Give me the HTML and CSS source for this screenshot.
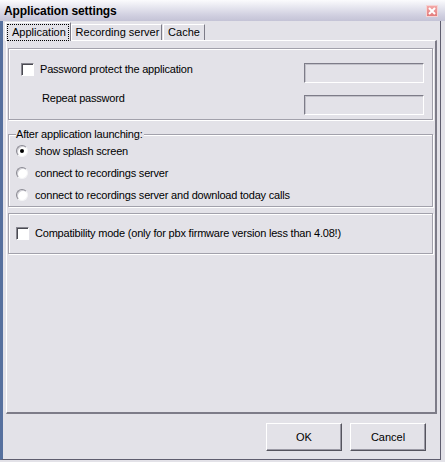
FILE: index.html
```html
<!DOCTYPE html>
<html>
<head>
<meta charset="utf-8">
<link rel="stylesheet" href="styles.css">
</head>
<body>
<div class="window">
  <div class="titlebar">
    <span class="title">Application settings</span>
    <span class="close"><svg width="10" height="10" viewBox="0 0 10 10"><path d="M2 2 L8 8 M8 2 L2 8" stroke="#fff" stroke-width="2"/></svg></span>
  </div>
  <div class="client">
    <div class="tabs">
      <div class="tab tab-sel"><span class="focus">Application</span></div>
      <div class="tab tab-rec">Recording server</div>
      <div class="tab tab-cache">Cache</div>
    </div>
    <div class="panel">
      <div class="group group1">
        <div class="check-row">
          <span class="checkbox"></span>
          <span class="label">Password protect the application</span>
        </div>
        <div class="field"></div>
        <div class="repeat">Repeat password</div>
        <div class="field"></div>
      </div>
      <fieldset class="group group2">
        <legend>After application launching:</legend>
        <div class="radio-row"><span class="radio on"></span><span class="label">show splash screen</span></div>
        <div class="radio-row"><span class="radio"></span><span class="label">connect to recordings server</span></div>
        <div class="radio-row"><span class="radio"></span><span class="label">connect to recordings server and download today calls</span></div>
      </fieldset>
      <div class="group group3">
        <span class="checkbox"></span>
        <span class="label">Compatibility mode (only for pbx firmware version less than 4.08!)</span>
      </div>
    </div>
    <div class="buttons">
      <div class="button">OK</div>
      <div class="button">Cancel</div>
    </div>
  </div>
</div>
</body>
</html>
```
FILE: styles.css
```css
html, body {
  margin: 0;
  padding: 0;
}
body {
  width: 445px;
  height: 462px;
  overflow: hidden;
  background: #e3e2e8;
  font-family: "Liberation Sans", Arial, sans-serif;
  font-size: 11px;
  color: #000;
}
.window {
  width: 445px;
  height: 462px;
  display: flex;
  flex-direction: column;
}
.titlebar {
  height: 21px;
  box-sizing: border-box;
  display: flex;
  align-items: center;
  justify-content: space-between;
  padding: 0 7px 0 4px;
  background: linear-gradient(#fbfbfd 0%, #e6e6ef 35%, #cfcedf 75%, #c4c3d6 100%);
}
.title {
  font-weight: bold;
  font-size: 12px;
  letter-spacing: -0.1px;
}
.close {
  width: 12px;
  height: 12px;
  display: flex;
  align-items: center;
  justify-content: center;
  background: linear-gradient(#f3a7a7, #e27d7d);
  border: 1px solid #f6d4d4;
  box-sizing: border-box;
  margin-top: 1px;
}
.client {
  flex: 1;
  display: flex;
  flex-direction: column;
  border-left: 3px solid #56709e;
  border-right: 1px solid #5e5d6e;
  border-bottom: 1px solid #5e5d6e;
  margin-right: 4px;
  margin-bottom: 2px;
  box-sizing: border-box;
}
.tabs {
  height: 19px;
  display: flex;
  align-items: flex-end;
  padding-left: 2px;
  position: relative;
  z-index: 1;
}
.tab {
  height: 16px;
  box-sizing: border-box;
  border-top: 1px solid #fff;
  border-left: 1px solid #fff;
  border-right: 1px solid #7d7c88;
  display: flex;
  align-items: center;
  justify-content: center;
  line-height: 13px;
}
.tab-sel {
  width: 66px;
  height: 19px;
  margin-bottom: -1px;
  background: #e3e2e8;
}
.focus {
  border: 1px dotted #000;
  padding: 1px 3px 1px 4px;
  width: 62px;
  box-sizing: border-box;
  height: 17px;
  display: flex;
  align-items: center;
  margin-top: 1px;
}
.tab-rec {
  width: 91px;
  padding-left: 2px;
}
.tab-cache {
  width: 42px;
  margin-left: 1px;
}
.panel {
  height: 374px;
  box-sizing: border-box;
  margin-left: 3px;
  margin-right: 3px;
  border-top: 1px solid #fff;
  border-left: 1px solid #fff;
  border-right: 2px solid #7d7c88;
  border-bottom: 2px solid #7d7c88;
  padding: 7px 3px 0 1px;
  display: flex;
  flex-direction: column;
}
.group {
  box-sizing: border-box;
  border: 1px solid #a2a1ab;
  box-shadow: inset 1px 1px 0 #fff, 1px 1px 0 #fff;
  width: 425px;
}
.group1 {
  height: 72px;
  display: grid;
  grid-template-columns: 1fr 120px;
  grid-template-rows: 20px 20px;
  row-gap: 12px;
  padding: 14px 8px 0 12px;
}
.check-row {
  display: flex;
  align-items: center;
  height: 20px;
  margin-top: -4px;
}
.checkbox {
  width: 13px;
  height: 13px;
  box-sizing: border-box;
  background: #fff;
  border-top: 1px solid #87868f;
  border-left: 1px solid #87868f;
  border-right: 1px solid #fff;
  border-bottom: 1px solid #fff;
  box-shadow: inset 1px 1px 0 #4a4a52;
  flex: none;
  margin-right: 6px;
}
.label {
  white-space: nowrap;
  line-height: 13px;
  letter-spacing: -0.2px;
}
.repeat {
  padding-left: 21px;
  line-height: 13px;
  margin-top: -3px;
  letter-spacing: -0.2px;
}
.field {
  box-sizing: border-box;
  border-top: 1px solid #7d7c88;
  border-left: 1px solid #7d7c88;
  border-right: 1px solid #fff;
  border-bottom: 1px solid #fff;
  box-shadow: inset 1px 1px 0 #c2c1c9;
  background: #e3e2e8;
}
fieldset.group2 {
  margin: 8px 0 0 0;
  padding: 0 0 0 7px;
  min-inline-size: 0;
}
.group2 legend {
  padding: 0 1px 0 0;
  margin-left: 0;
  line-height: 12px;
  letter-spacing: -0.2px;
  background: #e3e2e8;
}
.radio-row {
  height: 22px;
  display: flex;
  align-items: center;
}
.radio {
  width: 12px;
  height: 12px;
  box-sizing: border-box;
  border-radius: 50%;
  background: #fff;
  border: 1px solid;
  border-color: #8a8992 #f4f4f6 #f4f4f6 #8a8992;
  box-shadow: inset 1px 1px 0 #d0cfd6;
  display: flex;
  align-items: center;
  justify-content: center;
  margin-right: 7px;
  flex: none;
}
.radio.on::after {
  content: "";
  width: 4px;
  height: 4px;
  border-radius: 50%;
  background: #000;
}
.group3 {
  margin-top: 6px;
  height: 41px;
  display: flex;
  align-items: center;
  padding-left: 7px;
}
.buttons {
  flex: 1;
  display: flex;
  justify-content: flex-end;
  align-items: flex-start;
  gap: 8px;
  padding: 9px 14px 0 0;
}
.button {
  width: 76px;
  height: 28px;
  box-sizing: border-box;
  border-top: 1px solid #fff;
  border-left: 1px solid #fff;
  border-right: 1px solid #55545e;
  border-bottom: 1px solid #55545e;
  box-shadow: inset -1px -1px 0 #9a99a4;
  display: flex;
  align-items: center;
  justify-content: center;
  font-size: 11px;
}
```
